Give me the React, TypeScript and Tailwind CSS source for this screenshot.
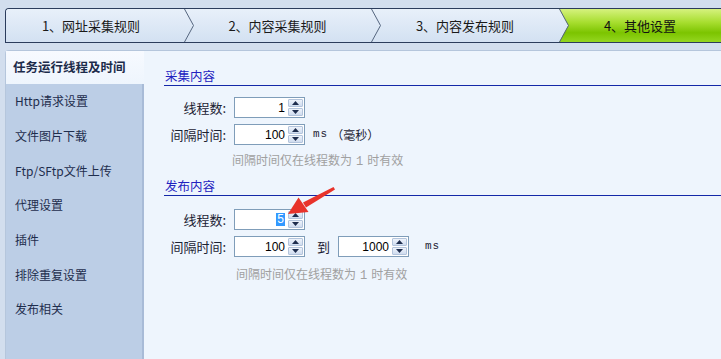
import React from 'react';

const CJK = { fontFamily: '"Noto Sans CJK SC", "Liberation Sans", sans-serif' };
const MONO = { fontFamily: '"Liberation Mono", "Noto Sans CJK SC", monospace' };
const NUM = { fontFamily: '"Liberation Sans", "DejaVu Sans", sans-serif' };

const TABS = [
  { label: '1、网址采集规则', w: 'w-[178px]' },
  { label: '2、内容采集规则', w: 'w-[187px]' },
  { label: '3、内容发布规则', w: 'w-[188px]' },
];

const SIDE = ['Http请求设置', '文件图片下载', 'Ftp/SFtp文件上传', '代理设置', '插件', '排除重复设置', '发布相关'];

function Chevron() {
  return (
    <svg className="absolute left-0 top-0" width="11" height="33" viewBox="0 0 11 33">
      <polyline points="0.5,0 9.5,16.5 0.5,33" fill="none" stroke="#55667f" strokeWidth="1" />
    </svg>
  );
}

function SpinBtn({ up }: { up?: boolean }) {
  return (
    <div className="flex-1 flex items-center justify-center rounded-[1px] border border-[#b3c4dc] bg-gradient-to-b from-[#eef3fb] to-[#cfdcef]">
      <svg width="7" height="4" viewBox="0 0 7 4">
        {up ? <polygon points="3.5,0 7,4 0,4" fill="#1e2d4d" /> : <polygon points="0,0 7,0 3.5,4" fill="#1e2d4d" />}
      </svg>
    </div>
  );
}

function Spinner({ value, w = 'w-[71px]', selected }: { value: string; w?: string; selected?: boolean }) {
  return (
    <div className={`${w} h-[21px] border border-[#7f9db9] bg-white flex items-stretch`}>
      <div className="flex-1 flex items-center justify-end pr-[3px] text-[12px] text-black" style={NUM}>
        {selected ? <span className="bg-[#3399ff] text-white px-[1px] leading-[13px]">{value}</span> : value}
      </div>
      <div className="w-[16px] flex flex-col gap-[1px] py-[1px] pr-[1px]">
        <SpinBtn up />
        <SpinBtn />
      </div>
    </div>
  );
}

function Label({ children }: { children: React.ReactNode }) {
  return (
    <div className="w-[62px] text-right text-[13px] text-[#1c2233] leading-[21px]" style={CJK}>
      {children}
    </div>
  );
}

function Heading({ children }: { children: React.ReactNode }) {
  return (
    <div className="h-[18px] border-b border-[#1428a8] text-[12.5px] leading-[15px] text-[#2222c0] pl-[1px]" style={CJK}>
      {children}
    </div>
  );
}

function Hint({ pad }: { pad: string }) {
  return (
    <div className={`${pad} text-[12px] leading-[16px] text-[#a0a0a0]`} style={CJK}>
      间隔时间仅在线程数为<span className="px-[4px]" style={MONO}>1</span>时有效
    </div>
  );
}

export default function App() {
  return (
    <div className="relative w-[721px] h-[359px] overflow-hidden bg-[#d2deee] flex flex-col" style={CJK}>
      {/* step tabs */}
      <div className="ml-[5px] mt-[8px] h-[35px] flex border-t border-b border-l border-[#2b3c5c] rounded-tl-[4px] overflow-hidden shrink-0">
        {TABS.map((t, i) => (
          <div
            key={t.label}
            className={`${t.w} relative h-full flex items-center justify-center bg-gradient-to-b from-[#e8f0fa] to-[#d3e1f2] text-[13px] text-[#1a1a1a] ${i === 0 ? 'pr-[8px]' : ''}`}
          >
            {i > 0 && <Chevron />}
            {t.label}
          </div>
        ))}
        <div className="flex-1 relative h-full">
          <div
            className="absolute inset-0 bg-[linear-gradient(to_bottom,#d6f27e_0%,#a8de30_40%,#7cc400_72%,#94d620_100%)]"
            style={{ clipPath: 'polygon(0 0, 100% 0, 100% 100%, 0 100%, 9px 50%)' }}
          />
          <div className="absolute inset-0 bg-gradient-to-b from-[#e8f0fa] to-[#d3e1f2] w-[10px]" style={{ clipPath: 'polygon(0 0, 9px 50%, 0 100%)' }} />
          <Chevron />
          <div className="relative h-full flex items-center justify-center text-[13px] text-[#111]">4、其他设置</div>
        </div>
      </div>

      {/* main panel */}
      <div className="ml-[5px] mt-[7px] flex-1 flex border-t border-l border-[#b5c6dc] rounded-tl-[4px] bg-[#eef5fd]">
        <div className="w-[138px] flex flex-col">
          <div className="h-[33px] flex items-center pl-[7px] bg-gradient-to-b from-[#f7faff] to-[#eef5fd] text-[12.5px] font-bold text-[#1c2b4a]">
            任务运行线程及时间
          </div>
          <div className="flex-1 bg-[#bccee6] border-r-2 border-[#a8bbd7]">
            {SIDE.map((s) => (
              <div key={s} className="h-[34.7px] flex items-center pl-[9px] text-[12px] text-[#1e2d4d]">
                {s}
              </div>
            ))}
          </div>
        </div>

        <div className="flex-1 pl-[20px] pt-[17px]">
          <Heading>采集内容</Heading>
          <div className="mt-[11px] flex items-center">
            <Label>线程数:</Label>
            <div className="ml-[8px]"><Spinner value="1" /></div>
          </div>
          <div className="mt-[6px] flex items-center">
            <Label>间隔时间:</Label>
            <div className="ml-[8px]"><Spinner value="100" /></div>
            <div className="ml-[8px] text-[12px] text-[#1c2233] flex items-center">
              <span style={MONO} className="text-[11px] tracking-[1px]">ms</span>
              <span className="ml-[3px]">（毫秒）</span>
            </div>
          </div>
          <div className="mt-[7px]"><Hint pad="pl-[68px]" /></div>

          <div className="mt-[8px]"><Heading>发布内容</Heading></div>
          <div className="mt-[13px] flex items-center">
            <Label>线程数:</Label>
            <div className="ml-[8px]"><Spinner value="5" selected /></div>
          </div>
          <div className="mt-[6px] flex items-center">
            <Label>间隔时间:</Label>
            <div className="ml-[8px]"><Spinner value="100" /></div>
            <div className="ml-[12px] text-[13px] text-[#1c2233]">到</div>
            <div className="ml-[8px]"><Spinner value="1000" /></div>
            <div className="ml-[16px] text-[11px] text-[#1c2233] tracking-[1px]" style={MONO}>ms</div>
          </div>
          <div className="mt-[9px]"><Hint pad="pl-[72px]" /></div>
        </div>
      </div>

      {/* red annotation arrow */}
      <svg className="absolute left-0 top-0 pointer-events-none" width="721" height="359" viewBox="0 0 721 359">
        <polygon points="333.5,187 335,189.5 306,207.5 303,202.5" fill="#e8332b" />
        <polygon points="288,214 298.5,197.5 308.5,212" fill="#e8332b" />
      </svg>
    </div>
  );
}
